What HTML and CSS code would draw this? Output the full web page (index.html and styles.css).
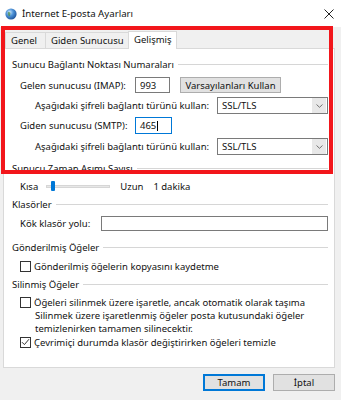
FILE: index.html
```html
<!DOCTYPE html>
<html lang="tr">
<head>
<meta charset="utf-8">
<title>İnternet E-posta Ayarları</title>
<link rel="stylesheet" href="styles.css">
</head>
<body>
<div class="window">
  <div class="titlebar">
    <svg class="globe" width="12" height="12" viewBox="0 0 12 12">
      <defs>
        <radialGradient id="g" cx="0.38" cy="0.35" r="0.7">
          <stop offset="0" stop-color="#cfe8ff"/>
          <stop offset="0.45" stop-color="#4f94d8"/>
          <stop offset="1" stop-color="#1b4f97"/>
        </radialGradient>
      </defs>
      <circle cx="6" cy="6" r="5.6" fill="url(#g)"/>
      <path d="M3 4.2c1-.6 2-.2 2.4.6.3.7-.4 1.3-.2 2 .2.8-.5 1.6-1.2 1.4C3.2 7.6 2.5 5.1 3 4.2z" fill="#4a8a3f" opacity="0.7"/>
    </svg>
    <span class="title">İnternet E-posta Ayarları</span>
    <svg class="close" width="10" height="10" viewBox="0 0 10 10">
      <path d="M0.5 0.5L9.5 9.5M9.5 0.5L0.5 9.5" stroke="#222" stroke-width="1"/>
    </svg>
  </div>
  <div class="content">
    <div class="tabs">
      <div class="tab">Genel</div>
      <div class="tab">Giden Sunucusu</div>
      <div class="tab active">Gelişmiş</div>
    </div>
    <div class="panel">
      <div class="group h1">Sunucu Bağlantı Noktası Numaraları</div>
      <div class="row r-imap">
        <span class="lbl">Gelen sunucusu (IMAP):</span>
        <span class="input port">993</span>
        <span class="btn defaults">Varsayılanları Kullan</span>
      </div>
      <div class="row r-sel1">
        <span class="lbl sub">Aşağıdaki şifreli bağlantı türünü kullan:</span>
        <span class="select"><span class="val">SSL/TLS</span><span class="arrow"><svg width="7" height="4" viewBox="0 0 7 4"><path d="M0.5 0.5L3.5 3.3L6.5 0.5" fill="none" stroke="#666" stroke-width="0.9"/></svg></span></span>
      </div>
      <div class="row r-smtp">
        <span class="lbl">Giden sunucusu (SMTP):</span>
        <span class="input port focus">465<span class="caret"></span></span>
      </div>
      <div class="row r-sel2">
        <span class="lbl sub">Aşağıdaki şifreli bağlantı türünü kullan:</span>
        <span class="select"><span class="val">SSL/TLS</span><span class="arrow"><svg width="7" height="4" viewBox="0 0 7 4"><path d="M0.5 0.5L3.5 3.3L6.5 0.5" fill="none" stroke="#666" stroke-width="0.9"/></svg></span></span>
      </div>
      <div class="group h2">Sunucu Zaman Aşımı Sayısı</div>
      <div class="row r-slider">
        <span class="lbl">Kısa</span>
        <span class="slider"><span class="track"></span><span class="thumb"></span></span>
        <span class="uzun">Uzun</span>
        <span class="dakika">1 dakika</span>
      </div>
      <div class="group h3">Klasörler</div>
      <div class="row r-root">
        <span class="lbl">Kök klasör yolu:</span>
        <span class="input wide"></span>
      </div>
      <div class="group h4">Gönderilmiş Öğeler</div>
      <div class="row r-cb1">
        <span class="cb"></span>
        <span>Gönderilmiş öğelerin kopyasını kaydetme</span>
      </div>
      <div class="group h5">Silinmiş Öğeler</div>
      <div class="row r-cb2">
        <span class="cb"></span>
        <span>Öğeleri silinmek üzere işaretle, ancak otomatik olarak taşıma</span>
      </div>
      <div class="note">Silinmek üzere işaretlenmiş öğeler posta kutusundaki öğeler<br>temizlenirken tamamen silinecektir.</div>
      <div class="row r-cb3">
        <span class="cb checked"><svg width="9" height="8" viewBox="0 0 9 8"><path d="M1 4.2L3.4 6.6L8 1.2" fill="none" stroke="#333" stroke-width="1"/></svg></span>
        <span>Çevrimiçi durumda klasör değiştirirken öğeleri temizle</span>
      </div>
    </div>
    <div class="buttons">
      <span class="btn dlg ok">Tamam</span>
      <span class="btn dlg">İptal</span>
    </div>
  </div>
  <div class="highlight"></div>
</div>
</body>
</html>
```

FILE: styles.css
```css
* { box-sizing: border-box; }
html, body {
  margin: 0;
  padding: 0;
}
body {
  width: 341px;
  height: 400px;
  overflow: hidden;
  background: #f0f0f0;
  font-family: "Noto Sans", "Open Sans", sans-serif;
  font-size: 9.5px;
  color: #111;
}
.window {
  position: relative;
  width: 341px;
  height: 400px;
}
.titlebar {
  height: 27px;
  background: #fff;
  display: flex;
  align-items: center;
  padding-left: 5px;
}
.globe { flex: none; }
.title {
  margin-left: 5px;
  font-size: 9.7px;
  color: #111;
}
.close {
  margin-left: auto;
  margin-right: 7px;
}
.content {
  padding: 4px 6px 0 3px;
}
.tabs {
  display: flex;
  height: 17px;
  padding-left: 2px;
  align-items: flex-end;
}
.tab {
  height: 16px;
  display: flex;
  align-items: center;
  padding: 0 5px;
  border: 1px solid #d9d9d9;
  border-bottom: none;
  background: #f0f0f0;
  margin-right: -1px;
  white-space: nowrap;
}
.tab:nth-child(1) { width: 41px; }
.tab:nth-child(2) { width: 84px; }
.tab.active {
  height: 18px;
  width: 49px;
  background: #fff;
  position: relative;
  z-index: 1;
  margin-bottom: -1px;
  padding-bottom: 2px;
}
.panel {
  height: 320px;
  background: #fff;
  border: 1px solid #d9d9d9;
  padding: 9px 6px 0 8px;
  display: flex;
  flex-direction: column;
}
.group {
  display: flex;
  align-items: center;
  height: 12px;
  white-space: nowrap;
}
.group::after {
  content: "";
  flex: 1;
  height: 1px;
  background: #d6d6d6;
  margin-left: 4px;
}
.row {
  display: flex;
  align-items: center;
  white-space: nowrap;
}
.lbl { padding-left: 8px; }
.lbl.sub { padding-left: 23px; }
.r-imap { margin-top: 7px; height: 16px; }
.r-sel1 { margin-top: 4px; height: 17px; }
.r-smtp { margin-top: 3px; height: 17px; }
.r-sel2 { margin-top: 4px; height: 17px; }
.h2 { margin-top: 7px; }
.r-slider { margin-top: 6px; height: 12px; }
.h3 { margin-top: 6px; }
.r-root { margin-top: 6px; height: 15px; }
.h4 { margin-top: 10px; }
.r-cb1 { margin-top: 7px; height: 12px; }
.h5 { margin-top: 6px; }
.r-cb2 { margin-top: 6px; height: 12px; }
.note {
  margin-top: 1px;
  padding-left: 23px;
  line-height: 13px;
  white-space: nowrap;
}
.r-cb3 { margin-top: 1px; height: 12px; }

.input {
  background: #fff;
  border: 1px solid #7a7a7a;
  height: 16px;
  display: flex;
  align-items: center;
  padding-left: 4px;
}
.port { width: 35px; flex: none; }
.r-imap .lbl { width: 123px; }
.r-smtp .lbl { width: 123px; }
.r-smtp .input { width: 37px; height: 17px; }
.input.focus { border-color: #0078d7; }
.caret {
  display: inline-block;
  width: 1px;
  height: 10px;
  background: #000;
  margin-left: 1px;
}
.btn {
  display: flex;
  align-items: center;
  justify-content: center;
  background: #e1e1e1;
  border: 1px solid #adadad;
  height: 16px;
}
.defaults {
  width: 101px;
  margin-left: 10px;
}
.select {
  margin-left: auto;
  width: 111px;
  height: 17px;
  border: 1px solid #7a7a7a;
  background: #fff;
  display: flex;
  align-items: center;
}
.select .val {
  flex: 1;
  padding-left: 4px;
}
.select .arrow {
  width: 14px;
  height: 15px;
  background: #e8e8e8;
  display: flex;
  align-items: center;
  justify-content: center;
  margin-right: 1px;
}
.slider {
  position: relative;
  width: 64px;
  height: 12px;
  margin-left: 8px;
}
.track {
  position: absolute;
  left: 0;
  right: 0;
  top: 5px;
  height: 3px;
  background: #e7e7e7;
  border: 1px solid #d6d6d6;
}
.thumb {
  position: absolute;
  left: 5px;
  top: 1px;
  width: 4px;
  height: 10px;
  background: #0078d7;
  border-radius: 1px;
}
.uzun { margin-left: 10px; }
.dakika { margin-left: 10px; }
.r-root .lbl { width: 89px; }
.input.wide { flex: 1; height: 15px; margin-right: 0; }
.cb {
  margin-left: 8px;
  width: 11px;
  height: 11px;
  border: 1px solid #333;
  background: #fff;
  margin-right: 3px;
  display: flex;
  align-items: center;
  justify-content: center;
  flex: none;
}
.buttons {
  display: flex;
  justify-content: flex-end;
  gap: 8px;
  padding-top: 6px;
  padding-right: 0;
}
.btn.dlg {
  width: 62px;
  height: 17px;
}
.btn.ok {
  border: 1px solid #0078d7;
  box-shadow: inset 0 0 0 1px #0078d7;
}
.highlight {
  position: absolute;
  left: 1px;
  top: 26px;
  width: 332px;
  height: 148px;
  border: 4px solid #f2161b;
  pointer-events: none;
}
```
